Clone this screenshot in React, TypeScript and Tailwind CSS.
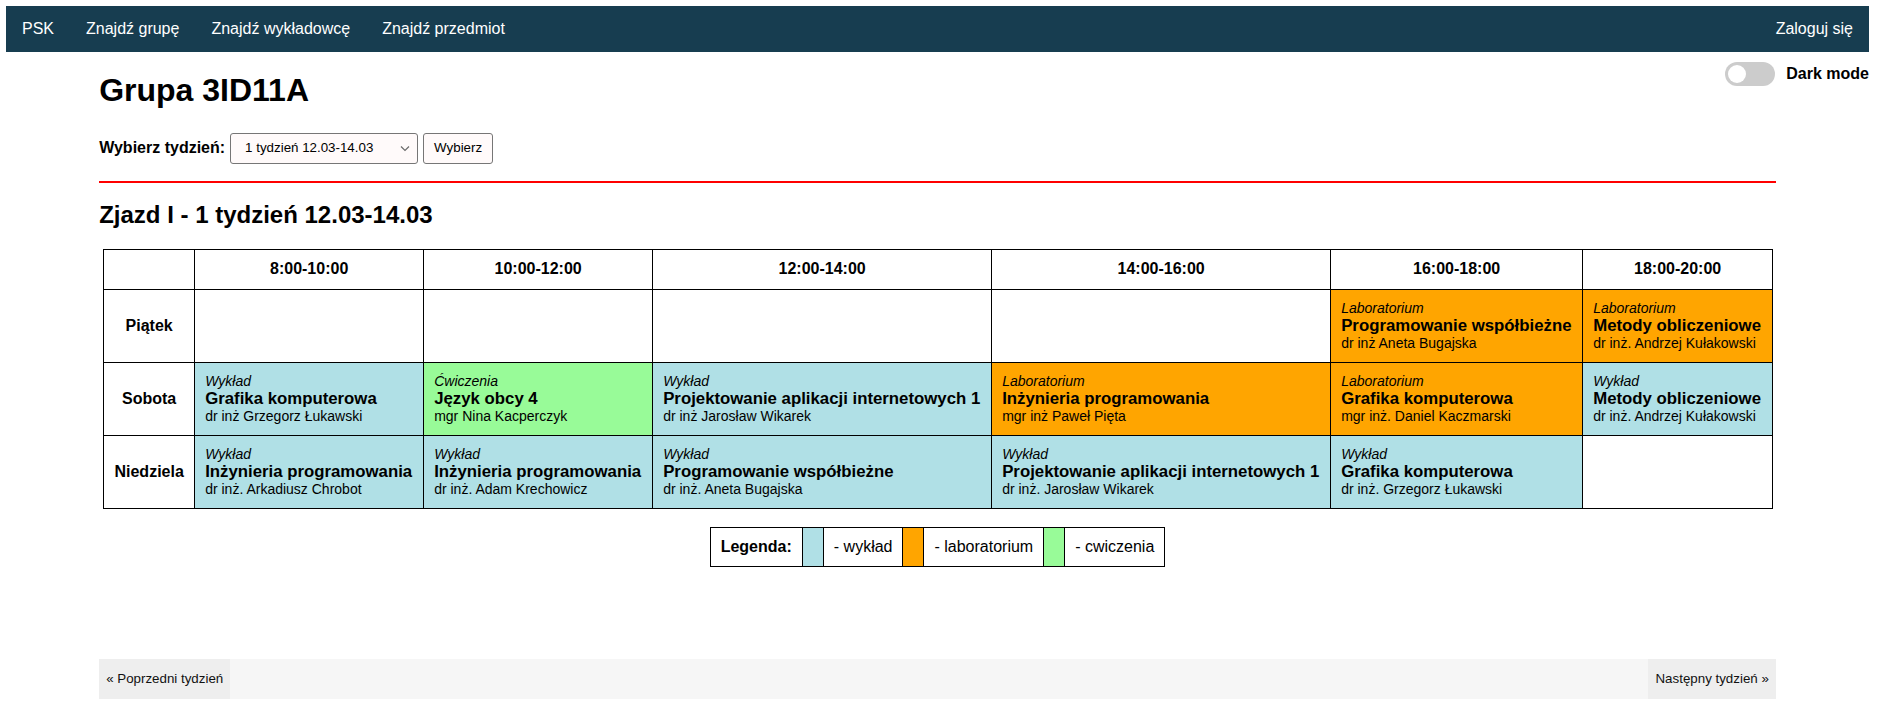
import { useState } from 'react';

type Zajecia = { typ: 'Wykład' | 'Laboratorium' | 'Ćwiczenia'; nazwa: string; prowadzacy: string } | null;

const godziny = ['8:00-10:00', '10:00-12:00', '12:00-14:00', '14:00-16:00', '16:00-18:00', '18:00-20:00'];
const szerokosci = ['w-[91px]', 'w-[229px]', 'w-[229px]', 'w-[339px]', 'w-[339px]', 'w-[252px]', 'w-[190px]'];

const plan: { dzien: string; zajecia: Zajecia[] }[] = [
  {
    dzien: 'Piątek',
    zajecia: [
      null,
      null,
      null,
      null,
      { typ: 'Laboratorium', nazwa: 'Programowanie współbieżne', prowadzacy: 'dr inż Aneta Bugajska' },
      { typ: 'Laboratorium', nazwa: 'Metody obliczeniowe', prowadzacy: 'dr inż. Andrzej Kułakowski' },
    ],
  },
  {
    dzien: 'Sobota',
    zajecia: [
      { typ: 'Wykład', nazwa: 'Grafika komputerowa', prowadzacy: 'dr inż Grzegorz Łukawski' },
      { typ: 'Ćwiczenia', nazwa: 'Język obcy 4', prowadzacy: 'mgr Nina Kacperczyk' },
      { typ: 'Wykład', nazwa: 'Projektowanie aplikacji internetowych 1', prowadzacy: 'dr inż Jarosław Wikarek' },
      { typ: 'Laboratorium', nazwa: 'Inżynieria programowania', prowadzacy: 'mgr inż Paweł Pięta' },
      { typ: 'Laboratorium', nazwa: 'Grafika komputerowa', prowadzacy: 'mgr inż. Daniel Kaczmarski' },
      { typ: 'Wykład', nazwa: 'Metody obliczeniowe', prowadzacy: 'dr inż. Andrzej Kułakowski' },
    ],
  },
  {
    dzien: 'Niedziela',
    zajecia: [
      { typ: 'Wykład', nazwa: 'Inżynieria programowania', prowadzacy: 'dr inż. Arkadiusz Chrobot' },
      { typ: 'Wykład', nazwa: 'Inżynieria programowania', prowadzacy: 'dr inż. Adam Krechowicz' },
      { typ: 'Wykład', nazwa: 'Programowanie współbieżne', prowadzacy: 'dr inż. Aneta Bugajska' },
      { typ: 'Wykład', nazwa: 'Projektowanie aplikacji internetowych 1', prowadzacy: 'dr inż. Jarosław Wikarek' },
      { typ: 'Wykład', nazwa: 'Grafika komputerowa', prowadzacy: 'dr inż. Grzegorz Łukawski' },
      null,
    ],
  },
];

const kolory = {
  Wykład: 'bg-[#b0e0e6]',
  Laboratorium: 'bg-[#ffa500]',
  Ćwiczenia: 'bg-[#98fb98]',
};

function Komorka({ z }: { z: Zajecia }) {
  if (!z) return <td className="border border-black p-[10px]"></td>;
  return (
    <td className={`border border-black p-[10px] align-middle leading-[1.15] ${kolory[z.typ]}`}>
      <div className="italic text-[14px]">{z.typ}</div>
      <div className="font-bold text-[16.8px]">{z.nazwa}</div>
      <div className="text-[14px]">{z.prowadzacy}</div>
    </td>
  );
}

export default function App() {
  const [dark, setDark] = useState(false);

  return (
    <div className="font-['Liberation_Sans',Arial,sans-serif] text-black bg-white min-h-screen">
      <nav className="mt-[6px] ml-[6px] mr-[8px] h-[46px] bg-[#173d50] text-white text-[16px] flex items-center justify-between">
        <div className="flex">
          <a className="px-4">PSK</a>
          <a className="px-4">Znajdź grupę</a>
          <a className="px-4">Znajdź wykładowcę</a>
          <a className="px-4">Znajdź przedmiot</a>
        </div>
        <a className="px-4">Zaloguj się</a>
      </nav>

      <div className="ml-[6px] mr-[8px]">
        <div className="float-right mt-[10px] flex items-center gap-[11px]">
          <button
            onClick={() => setDark(!dark)}
            className={`w-[50px] h-[24px] rounded-full p-[3px] flex ${dark ? 'bg-[#2196f3] justify-end' : 'bg-[#cccccc] justify-start'}`}
          >
            <span className="block size-[18px] rounded-full bg-white"></span>
          </button>
          <span className="font-bold text-[16px] leading-[1.15]">Dark mode</span>
        </div>

        <div className="w-[90%] mx-auto pt-[20px]">
          <h1 className="text-[32px] font-bold leading-[1.15]">Grupa 3ID11A</h1>

          <div className="mt-[24px] flex items-center h-[31px]">
            <label className="font-bold text-[16px] mr-[5px]">Wybierz tydzień:</label>
            <div className="relative w-[188px] h-[31px]">
              <select className="appearance-none w-full h-full border border-[#767676] rounded-[3px] bg-[#fffafa] pl-[14px] text-[13.33px] outline-none">
                <option>1 tydzień 12.03-14.03</option>
              </select>
              <svg className="absolute right-[8px] top-[12px] pointer-events-none" width="10" height="7" viewBox="0 0 10 7">
                <path d="M1 1.5 L5 5.5 L9 1.5" fill="none" stroke="#6b6b6b" strokeWidth="1.2" />
              </svg>
            </div>
            <button className="ml-[5px] w-[70px] h-[31px] border border-[#767676] rounded-[3px] bg-[#fffafa] text-[13.33px]">
              Wybierz
            </button>
          </div>

          <div className="mt-[17px] h-[2px] bg-[#ff0000]"></div>

          <h2 className="mt-[18px] text-[24px] font-bold leading-[1.15]">Zjazd I - 1 tydzień 12.03-14.03</h2>

          <table className="mt-[21px] ml-[4px] w-[1669px] table-fixed border-collapse text-[16px] leading-[1.15]">
            <thead>
              <tr>
                <th className={`border border-black p-[10px] ${szerokosci[0]}`}></th>
                {godziny.map((g, i) => (
                  <th key={g} className={`border border-black p-[10px] font-bold text-center ${szerokosci[i + 1]}`}>
                    {g}
                  </th>
                ))}
              </tr>
            </thead>
            <tbody>
              {plan.map((d) => (
                <tr key={d.dzien} className="h-[73px]">
                  <td className="border border-black p-[10px] font-bold text-center">{d.dzien}</td>
                  {d.zajecia.map((z, i) => (
                    <Komorka key={i} z={z} />
                  ))}
                </tr>
              ))}
            </tbody>
          </table>

          <div className="mt-[18px] flex justify-center">
            <table className="border-collapse text-[16px] leading-[1.15]">
              <tbody>
                <tr>
                  <td className="border border-black p-[10px] font-bold">Legenda:</td>
                  <td className="border border-black p-[10px] bg-[#b0e0e6]"></td>
                  <td className="border border-black p-[10px]">- wykład</td>
                  <td className="border border-black p-[10px] bg-[#ffa500]"></td>
                  <td className="border border-black p-[10px]">- laboratorium</td>
                  <td className="border border-black p-[10px] bg-[#98fb98]"></td>
                  <td className="border border-black p-[10px]">- cwiczenia</td>
                </tr>
              </tbody>
            </table>
          </div>

          <div className="mt-[92px] h-[40px] bg-[#f6f6f6] flex justify-between text-[13.33px] text-[#111]">
            <a className="px-[7px] bg-[#eeeeee] flex items-center">« Poprzedni tydzień</a>
            <a className="px-[7px] bg-[#eeeeee] flex items-center">Następny tydzień »</a>
          </div>
        </div>
      </div>
    </div>
  );
}
